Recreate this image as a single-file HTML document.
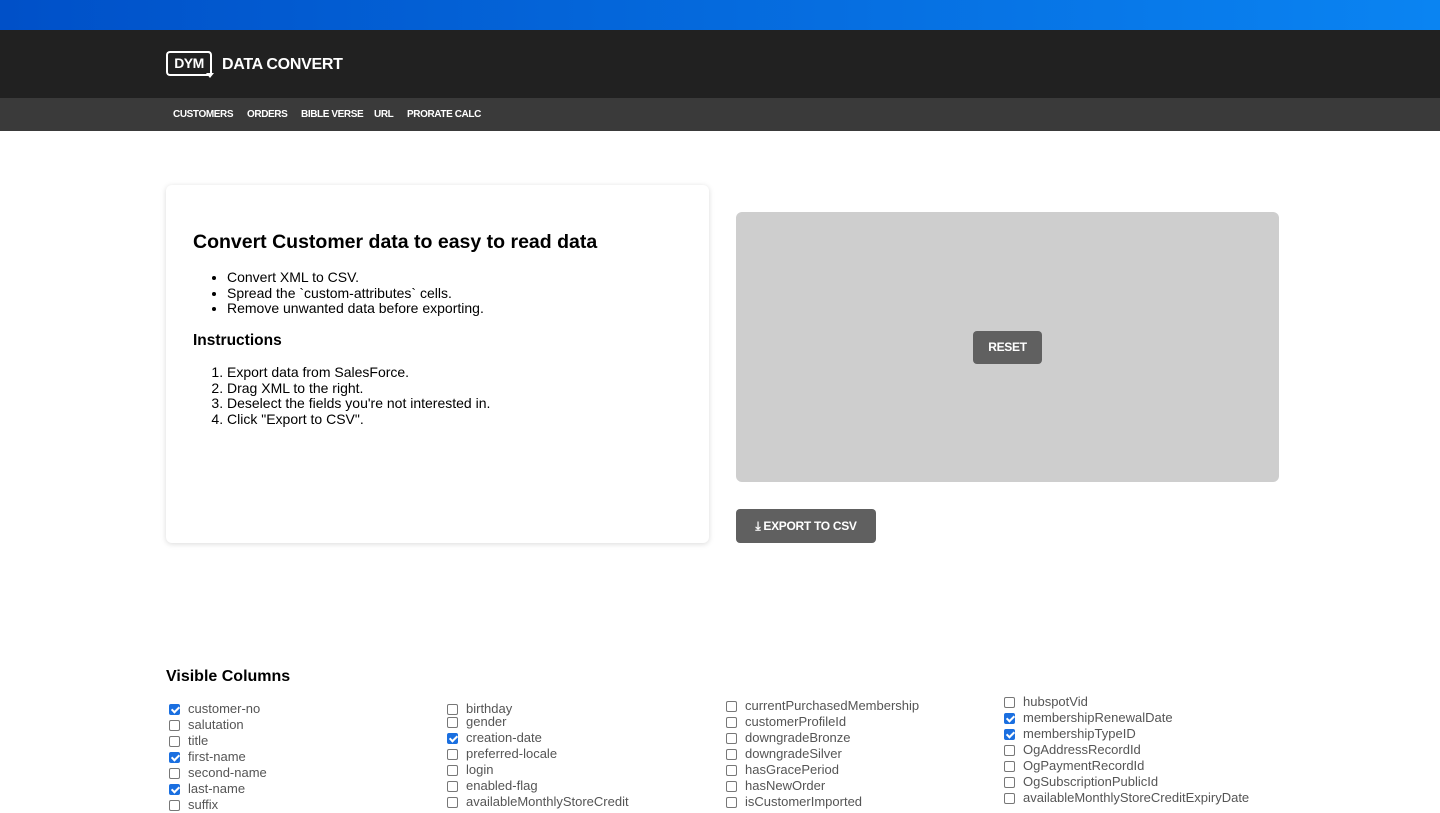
<!DOCTYPE html>
<html><head><meta charset="utf-8"><style>
*{box-sizing:border-box;margin:0;padding:0}
body{width:1440px;height:800px;overflow:hidden;background:#fff;font-family:"Liberation Sans",sans-serif;position:relative}
.top{position:absolute;left:0;top:0;width:1440px;height:30px;background:linear-gradient(90deg,#0050c8,#0a84f2)}
.hdr{position:absolute;top:30px;left:0;width:1440px;height:68px;background:#212121}
.nav{position:absolute;top:98px;left:0;width:1440px;height:33px;background:#3a3a3a}
.nav span{position:absolute;top:11px;color:#fff;font-size:10px;font-weight:bold;letter-spacing:-0.4px}
.logo{position:absolute;left:166px;top:51px;width:46px;height:25px;border:2px solid #fff;border-right-color:transparent;border-radius:4px;color:#fff;font-size:14px;font-weight:bold;text-align:center;line-height:21px;letter-spacing:-0.5px}
.logo:after{content:"";position:absolute;right:-2px;top:-2px;width:4px;height:22px;border-top:2px solid #fff;border-right:2px solid #fff;border-radius:0 4px 0 0}
.arr{position:absolute;left:206px;top:73px;width:0;height:0;border-left:4px solid transparent;border-right:4px solid transparent;border-top:5px solid #fff}
.title{position:absolute;left:222px;top:56px;color:#fff;font-size:16px;font-weight:bold;letter-spacing:-0.3px}
.card{position:absolute;left:166px;top:185px;width:543px;height:358px;border-radius:6px;box-shadow:0 1px 6px rgba(0,0,0,.15);background:#fff}
.card h1{position:absolute;left:27px;top:46px;font-size:19.5px}
.card h2{position:absolute;left:27px;top:147px;font-size:15.5px}
.card ul,.card ol{position:absolute;left:61px;font-size:14px;line-height:15.5px}
.drop{position:absolute;left:736px;top:212px;width:543px;height:270px;background:#cecece;border-radius:6px}
.btn{position:absolute;background:#606060;color:#fff;font-size:12px;font-weight:bold;border-radius:4px;text-align:center;letter-spacing:-0.3px}
h3{position:absolute;left:166px;top:668px;font-size:16px}
.col{position:absolute;font-size:13px;color:#555;line-height:16px}
.col div{display:flex;align-items:center;height:16px}
.cb{width:11px;height:11px;border:1px solid #777;border-radius:2px;margin:0 8px 0 3px;flex:none}
.on{background:#1a6fe0;border-color:#1a6fe0;position:relative}
.on:after{content:"";position:absolute;left:3px;top:0px;width:3px;height:6px;border:solid #fff;border-width:0 2px 2px 0;transform:rotate(45deg)}
</style></head><body>
<div class="top"></div>
<div class="hdr"></div>
<div class="logo">DYM</div><div class="arr"></div>
<div class="title">DATA CONVERT</div>
<div class="nav"><span style="left:173px">CUSTOMERS</span><span style="left:247px">ORDERS</span><span style="left:301px">BIBLE VERSE</span><span style="left:374px">URL</span><span style="left:407px">PRORATE CALC</span></div>
<div class="card">
<h1>Convert Customer data to easy to read data</h1>
<ul style="top:85px"><li>Convert XML to CSV.</li><li>Spread the `custom-attributes` cells.</li><li>Remove unwanted data before exporting.</li></ul>
<h2>Instructions</h2>
<ol style="top:180px"><li>Export data from SalesForce.</li><li>Drag XML to the right.</li><li>Deselect the fields you're not interested in.</li><li>Click "Export to CSV".</li></ol>
</div>
<div class="drop"></div>
<div class="btn" style="left:973px;top:331px;width:69px;height:33px;line-height:33px">RESET</div>
<div class="btn" style="left:736px;top:509px;width:140px;height:34px;line-height:34px">&#10515; EXPORT TO CSV</div>
<h3>Visible Columns</h3>
<div class="col" style="left:166px;top:701px">
<div><i class="cb on"></i>customer-no</div><div><i class="cb"></i>salutation</div><div><i class="cb"></i>title</div><div><i class="cb on"></i>first-name</div><div><i class="cb"></i>second-name</div><div><i class="cb on"></i>last-name</div><div><i class="cb"></i>suffix</div></div>
<div class="col" style="left:444px;top:701px">
<div><i class="cb"></i>birthday</div><div style="margin-top:-3px"><i class="cb"></i>gender</div><div><i class="cb on"></i>creation-date</div><div><i class="cb"></i>preferred-locale</div><div><i class="cb"></i>login</div><div><i class="cb"></i>enabled-flag</div><div><i class="cb"></i>availableMonthlyStoreCredit</div></div>
<div class="col" style="left:723px;top:698px">
<div><i class="cb"></i>currentPurchasedMembership</div><div><i class="cb"></i>customerProfileId</div><div><i class="cb"></i>downgradeBronze</div><div><i class="cb"></i>downgradeSilver</div><div><i class="cb"></i>hasGracePeriod</div><div><i class="cb"></i>hasNewOrder</div><div><i class="cb"></i>isCustomerImported</div></div>
<div class="col" style="left:1001px;top:694px">
<div><i class="cb"></i>hubspotVid</div><div><i class="cb on"></i>membershipRenewalDate</div><div><i class="cb on"></i>membershipTypeID</div><div><i class="cb"></i>OgAddressRecordId</div><div><i class="cb"></i>OgPaymentRecordId</div><div><i class="cb"></i>OgSubscriptionPublicId</div><div><i class="cb"></i>availableMonthlyStoreCreditExpiryDate</div></div>
</body></html>
